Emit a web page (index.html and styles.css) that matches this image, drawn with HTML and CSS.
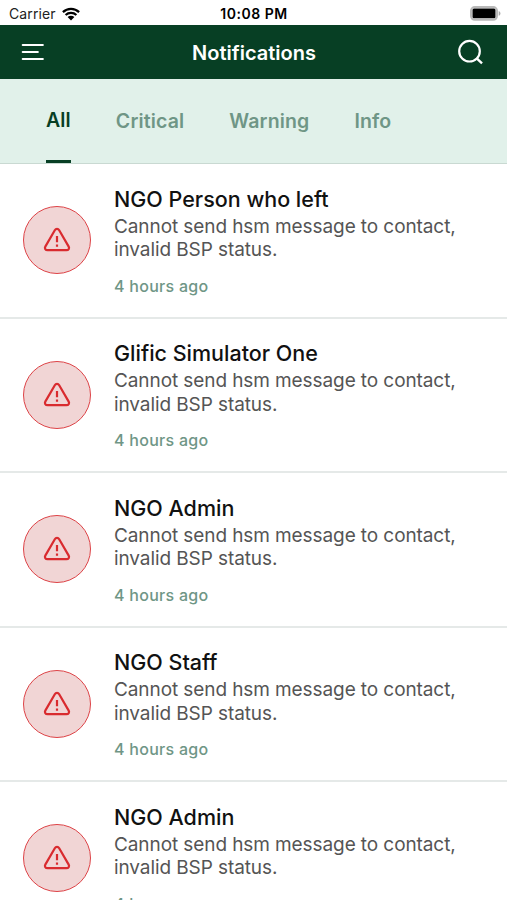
FILE: index.html
```html
<!DOCTYPE html>
<html lang="en">
<head>
    <meta charset="UTF-8">
    <meta name="viewport" content="width=device-width, initial-scale=1.0">
    <title>Notifications</title>
    <link rel="stylesheet" href="styles.css">
</head>
<body>
    <!-- shared icon -->
    <svg width="0" height="0" class="sprite">
        <symbol id="alert" viewBox="0 0 28 26">
            <path d="M11.8 3.2 2.3 19.6c-1 1.8.2 3.6 2.2 3.6h19c2 0 3.2-1.8 2.2-3.6L16.2 3.2c-1-1.7-3.4-1.7-4.4 0z" fill="none" stroke="#d92b2f" stroke-width="2.2" stroke-linejoin="round"/>
            <path d="M14 9v6.200M14 17.600v2.200" fill="none" stroke="#d92b2f" stroke-width="2.200"/>
        </symbol>
    </svg>

    <div class="status-bar">
        <div class="carrier">
            <span>Carrier</span>
            <svg width="18" height="14" viewBox="0 0 18 14">
                <path d="M.9 5.100a11.700 11.700 0 0 1 16.200 0M3.600 8a7.800 7.800 0 0 1 10.800 0" fill="none" stroke="#000" stroke-width="2.200"/>
                <path d="M5.600 10a4.900 4.900 0 0 1 6.800 0L9 13.500z"/>
            </svg>
        </div>
        <div class="time">10:08 PM</div>
        <svg class="battery" width="31" height="15" viewBox="0 0 31 15">
            <rect x="1" y="1" width="26" height="12.800" rx="3.800" fill="#fff" stroke="#b9b9b9" stroke-width="2"/>
            <rect x="2.500" y="2.600" width="23" height="9.600" rx="1.500"/>
            <path d="M28.700 5c2.300.8 2.300 4 0 4.800z" fill="#aaa"/>
        </svg>
    </div>

    <div class="header">
        <svg width="24" height="18" viewBox="0 0 24 18">
            <path d="M2.800 2h20M2.800 9h15M2.800 16h20" fill="none" stroke="#fff" stroke-width="2.200" stroke-linecap="round"/>
        </svg>
        <h1>Notifications</h1>
        <svg width="26" height="26" viewBox="0 0 26 26">
            <circle cx="12.500" cy="12.200" r="10.300" fill="none" stroke="#fff" stroke-width="2.200"/>
            <path d="M19.500 19.200 25 24.300" fill="none" stroke="#fff" stroke-width="2.400"/>
        </svg>
    </div>

    <div class="tabs">
        <div class="tab active">All</div>
        <div class="tab">Critical</div>
        <div class="tab">Warning</div>
        <div class="tab">Info</div>
    </div>

    <div class="list">
        <div class="item">
            <div class="avatar"><svg width="28" height="26"><use href="#alert"/></svg></div>
            <div class="content">
                <div class="name">NGO Person who left</div>
                <div class="message">Cannot send hsm message to contact,<br>invalid BSP status.</div>
                <div class="ago">4 hours ago</div>
            </div>
        </div>
        <div class="item">
            <div class="avatar"><svg width="28" height="26"><use href="#alert"/></svg></div>
            <div class="content">
                <div class="name">Glific Simulator One</div>
                <div class="message">Cannot send hsm message to contact,<br>invalid BSP status.</div>
                <div class="ago">4 hours ago</div>
            </div>
        </div>
        <div class="item">
            <div class="avatar"><svg width="28" height="26"><use href="#alert"/></svg></div>
            <div class="content">
                <div class="name">NGO Admin</div>
                <div class="message">Cannot send hsm message to contact,<br>invalid BSP status.</div>
                <div class="ago">4 hours ago</div>
            </div>
        </div>
        <div class="item">
            <div class="avatar"><svg width="28" height="26"><use href="#alert"/></svg></div>
            <div class="content">
                <div class="name">NGO Staff</div>
                <div class="message">Cannot send hsm message to contact,<br>invalid BSP status.</div>
                <div class="ago">4 hours ago</div>
            </div>
        </div>
        <div class="item">
            <div class="avatar"><svg width="28" height="26"><use href="#alert"/></svg></div>
            <div class="content">
                <div class="name">NGO Admin</div>
                <div class="message">Cannot send hsm message to contact,<br>invalid BSP status.</div>
                <div class="ago">4 hours ago</div>
            </div>
        </div>
    </div>
</body>
</html>
```
FILE: styles.css
```css
* {
    box-sizing: border-box;
    margin: 0;
    padding: 0;
}

body {
    height: 900px;
    overflow: hidden;
    display: flex;
    flex-direction: column;
    background: #fff;
    font-family: Inter, "Liberation Sans", sans-serif;
}

svg {
    display: block;
    flex-shrink: 0;
}

.sprite {
    display: none;
}

.status-bar {
    height: 25px;
    flex-shrink: 0;
    display: grid;
    grid-template-columns: 1fr auto 1fr;
    align-items: center;
    padding: 2px 6px 0 9px;
    font-size: 14px;
    color: #222;
}

.carrier {
    display: flex;
    align-items: center;
    gap: 6px;
    letter-spacing: 0.1px;
}

.time {
    margin-right: 2px;
    font-weight: 600;
    font-size: 14px;
    letter-spacing: 0.5px;
    color: #000;
}

.battery {
    justify-self: end;
}

.header {
    height: 54px;
    flex-shrink: 0;
    display: flex;
    align-items: center;
    justify-content: space-between;
    padding: 0 24px 0 20px;
    background: #073f24;
    color: #fff;
}

.header h1 {
    margin-left: 7px;
    padding-top: 1px;
    font-size: 20px;
    font-weight: 600;
}

.tabs {
    height: 85px;
    flex-shrink: 0;
    display: flex;
    padding-left: 46px;
    background: #e1f1ea;
    border-bottom: 1px solid #c9d9d2;
}

.tab {
    height: 84px;
    margin-right: 45px;
    line-height: 85px;
    font-size: 19.5px;
    font-weight: 600;
    letter-spacing: 0.15px;
    color: #6f9686;
}

.tab.active {
    line-height: 82px;
    color: #073f24;
    border-bottom: 3px solid #073f24;
}

.list {
    flex: 1;
    overflow: hidden;
}

.item {
    height: 154.5px;
    display: flex;
    align-items: center;
    padding-left: 23px;
    border-bottom: 2px solid #e5e9e8;
}

.avatar {
    width: 68px;
    height: 68px;
    flex-shrink: 0;
    display: flex;
    align-items: center;
    justify-content: center;
    margin-right: 23px;
    border: 1.5px solid #dd4347;
    border-radius: 50%;
    background: #f1d5d5;
}

.content {
    white-space: nowrap;
}

.name {
    line-height: 28px;
    font-size: 21.5px;
    font-weight: 500;
    color: #111;
}

.message {
    margin-top: 2px;
    line-height: 23.5px;
    font-size: 19px;
    letter-spacing: -0.09px;
    color: #555;
}

.ago {
    margin-top: 14px;
    line-height: 20px;
    font-size: 16px;
    font-weight: 500;
    letter-spacing: 0.27px;
    color: #6f9686;
}
```
